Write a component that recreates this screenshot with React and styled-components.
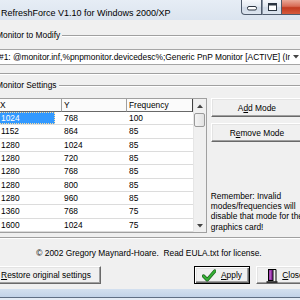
import React from 'react';
import styled, { createGlobalStyle, css } from 'styled-components';

const Global = createGlobalStyle`
  html, body { margin: 0; padding: 0; overflow: hidden; background: #f0f0f0; }
  #root { width: 300px; height: 300px; overflow: hidden; }
`;

const Win = styled.div`
  width: 358px;
  margin-left: -24px;
  background: linear-gradient(#d9e4f1, #c8d7ea);
  font-family: "Liberation Sans", Arial, sans-serif;
  font-size: 8.4px;
  color: #000;
`;

const TitleBar = styled.div`
  height: 20px;
  display: flex;
  align-items: flex-start;
  padding-left: 25px;
  background: linear-gradient(#e6edf5, #dbe4ef);
`;

const TitleText = styled.div`
  flex: 1;
  margin-top: 5.5px;
  line-height: 14px;
  font-size: 9px;
  white-space: nowrap;
`;

const CaptionButtons = styled.div`
  display: flex;
  height: 15px;
  margin-right: 6px;
`;

const CaptionButton = styled.div`
  width: ${p => p.$w}px;
  height: 15px;
  box-sizing: border-box;
  display: flex;
  justify-content: center;
  align-items: ${p => (p.$kind === 'min' ? 'flex-end' : 'center')};
  padding-bottom: ${p => (p.$kind === 'min' ? 3 : 0)}px;
  border: 1px solid #4f5b6c;
  border-top: none;
  background: linear-gradient(#f6f8fb, #e3e9f1 45%, #d0dae7 55%, #dde5ef);
  ${p => p.$kind === 'min' && css`border-bottom-left-radius: 4px;`}
  ${p => p.$kind === 'max' && css`border-left: 1px solid #8a95a4;`}
  ${p =>
    p.$kind === 'close' &&
    css`
      border-left: none;
      border-bottom-right-radius: 4px;
      background: linear-gradient(#eaa999, #d86b55 45%, #c23a20 55%, #d65b3d);
    `}
`;

const Client = styled.div`
  margin: 0 6px;
  background: #f0f0f0;
  padding: 15px 21px 5px 9px;
  display: flex;
  flex-direction: column;
`;

const GroupBox = styled.section`
  border: 1px solid #a0a0a0;
  box-shadow: inset 1px 1px 0 #fff, 1px 1px 0 #fff;
  padding: 0 3px ${p => p.$pb}px 4px;
  margin-top: ${p => p.$mt}px;
  display: flex;
  flex-direction: column;
`;

const GroupLabel = styled.div`
  width: fit-content;
  margin: -6px 0 0 -2px;
  padding: 0 2px;
  line-height: 10px;
  background: #f0f0f0;
  white-space: nowrap;
`;

const Combo = styled.div`
  margin-top: 9px;
  height: 16px;
  box-sizing: border-box;
  display: flex;
  border: 1px solid #a6a6a6;
  background: #fff;
`;

const ComboText = styled.div`
  flex: 1;
  overflow: hidden;
  white-space: nowrap;
  padding-left: 2px;
  line-height: 14px;
`;

const ComboArrow = styled.div`
  width: 12px;
  display: flex;
  align-items: center;
  justify-content: center;
`;

const SettingsRow = styled.div`
  margin-top: 8px;
  display: flex;
  gap: 4px;
`;

const ListView = styled.div`
  width: 212px;
  height: 135px;
  box-sizing: border-box;
  border: 1px solid #a0a0a0;
  background: #fff;
  display: flex;
  overflow: hidden;
`;

const ListBody = styled.div`
  width: 196px;
  display: flex;
  flex-direction: column;
`;

const HeaderRow = styled.div`
  display: grid;
  grid-template-columns: 65px 65px 66px;
  height: 13px;
`;

const HeaderCell = styled.div`
  box-sizing: border-box;
  line-height: 12px;
  padding-left: ${p => p.$pad}px;
  background: #fbfbfb;
  border-right: 1px solid ${p => (p.$last ? '#404040' : '#a0a0a0')};
  border-bottom: 1px solid #696969;
  white-space: nowrap;
`;

const Row = styled.div`
  display: grid;
  grid-template-columns: 65px 65px 66px;
  height: 13.33px;
  box-sizing: border-box;
  border-bottom: 1px solid #dcdcdc;
`;

const Cell = styled.div`
  line-height: 12.33px;
  padding-left: ${p => p.$pad}px;
  white-space: nowrap;
`;

const SelectedText = styled.div`
  width: 58px;
  height: 100%;
  box-sizing: border-box;
  padding-left: 4px;
  line-height: 12.33px;
  background: #3399ff;
  color: #fff;
  outline: 1px dotted #ffe0a0;
  outline-offset: -1px;
`;

const ScrollBar = styled.div`
  width: 14px;
  display: flex;
  flex-direction: column;
  background: #f0f0f0;
  border-left: 1px solid #e6e6e6;
  box-sizing: border-box;
`;

const ScrollArrow = styled.div`
  height: ${p => p.$h}px;
  display: flex;
  align-items: center;
  justify-content: center;
`;

const ScrollTrack = styled.div`
  flex: 1;
  display: flex;
  flex-direction: column;
  align-items: center;
`;

const ScrollThumb = styled.div`
  width: 11px;
  height: 14px;
  margin-top: 1px;
  box-sizing: border-box;
  border: 1px solid #9a9a9a;
  border-radius: 2px;
  background: linear-gradient(90deg, #f4f4f4, #e2e2e2);
`;

const SidePanel = styled.div`
  flex: 1;
  display: flex;
  flex-direction: column;
  gap: 6px;
`;

const bevel = css`
  border: 1px solid;
  border-color: #fff #696969 #696969 #fff;
  box-shadow: inset -1px -1px 0 #a0a0a0, inset 1px 1px 0 #e3e3e3;
`;

const Button = styled.div`
  height: ${p => p.$h || 19}px;
  width: ${p => (p.$w ? `${p.$w}px` : 'auto')};
  flex-shrink: 0;
  box-sizing: border-box;
  background: #f0f0f0;
  display: flex;
  align-items: center;
  justify-content: center;
  gap: ${p => p.$gap || 0}px;
  white-space: nowrap;
  ${p =>
    p.$default
      ? css`
          border: 1px solid #000;
          box-shadow: inset 1px 1px 0 #fff, inset -1px -1px 0 #696969,
            inset -2px -2px 0 #a0a0a0, inset 2px 2px 0 #e3e3e3;
        `
      : bevel}
`;

const Note = styled.div`
  margin-top: auto;
  line-height: 10.3px;
  white-space: nowrap;
  padding-bottom: 1px;
`;

const Copyright = styled.div`
  margin-top: 10px;
  line-height: 10px;
  text-align: center;
  white-space: pre;
`;

const ButtonRow = styled.div`
  margin-top: 8px;
  margin-right: -7px;
  display: flex;
  align-items: center;
`;

const Spacer = styled.div`
  flex: 1;
`;

const BottomFrame = styled.div`
  height: 8px;
  background: linear-gradient(#d3e0ef, #c2d3e8);
  border-bottom: 1px solid #5f6f84;
`;

const Desk = styled.div`
  height: 4px;
  background: #e4ecf5;
`;

const Tri = ({ up, color = '#444' }) => (
  <svg width="6" height="4" viewBox="0 0 6 4">
    <path d={up ? 'M0 4 L3 0.5 L6 4 Z' : 'M0 0 L3 3.5 L6 0 Z'} fill={color} />
  </svg>
);

const CheckIcon = () => (
  <svg width="14" height="13" viewBox="0 0 14 13">
    <path d="M1.5 7 L5.2 10.8 L12.8 2" fill="none" stroke="#1f5f1f" strokeWidth="3.4" strokeLinecap="round" strokeLinejoin="round" />
    <path d="M1.5 7 L5.2 10.8 L12.8 2" fill="none" stroke="#34b034" strokeWidth="2" strokeLinecap="round" strokeLinejoin="round" />
  </svg>
);

const DoorIcon = () => (
  <svg width="12" height="15" viewBox="0 0 12 15">
    <rect x="2.5" y="1.5" width="4.5" height="11" fill="#8e2a9e" stroke="#000" strokeWidth="1" />
    <rect x="3.5" y="2.5" width="1.2" height="9" fill="#c46ad0" />
    <path d="M2 1.5 H10 V13.5" fill="none" stroke="#000" strokeWidth="1" />
    <path d="M0.5 14 H11.5" stroke="#000" strokeWidth="1.4" />
  </svg>
);

const rows = [
  ['1024', '768', '100'],
  ['1152', '864', '85'],
  ['1280', '1024', '85'],
  ['1280', '720', '85'],
  ['1280', '768', '85'],
  ['1280', '800', '85'],
  ['1280', '960', '85'],
  ['1360', '768', '75'],
  ['1600', '1024', '75'],
];

export default function App() {
  return (
    <>
      <Global />
      <Win>
        <TitleBar>
          <TitleText>RefreshForce V1.10 for Windows 2000/XP</TitleText>
          <CaptionButtons>
            <CaptionButton $kind="min" $w={21}>
              <svg width="10" height="5" viewBox="0 0 10 5">
                <rect x="0.5" y="0.5" width="9" height="3.5" rx="1.5" fill="#fff" stroke="#2b3440" />
              </svg>
            </CaptionButton>
            <CaptionButton $kind="max" $w={20}>
              <svg width="9" height="8" viewBox="0 0 9 8">
                <rect x="0.5" y="0.5" width="8" height="7" fill="#fff" stroke="#2b3440" />
                <rect x="1" y="1" width="7" height="1.5" fill="#2b3440" />
              </svg>
            </CaptionButton>
            <CaptionButton $kind="close" $w={46}>
              <svg width="10" height="9" viewBox="0 0 10 9">
                <path d="M1 1 L9 8 M9 1 L1 8" stroke="#fff" strokeWidth="2" />
              </svg>
            </CaptionButton>
          </CaptionButtons>
        </TitleBar>
        <Client>
          <GroupBox $mt={0} $pb={8}>
            <GroupLabel>Monitor to Modify</GroupLabel>
            <Combo>
              <ComboText>
                #1: @monitor.inf,%pnpmonitor.devicedesc%;Generic PnP Monitor [ACTIVE] (Integrated)
              </ComboText>
              <ComboArrow>
                <Tri />
              </ComboArrow>
            </Combo>
          </GroupBox>
          <GroupBox $mt={11} $pb={4}>
            <GroupLabel>Monitor Settings</GroupLabel>
            <SettingsRow>
              <ListView>
                <ListBody>
                  <HeaderRow>
                    <HeaderCell $pad={3}>X</HeaderCell>
                    <HeaderCell $pad={2}>Y</HeaderCell>
                    <HeaderCell $pad={2} $last>
                      Frequency
                    </HeaderCell>
                  </HeaderRow>
                  {rows.map((r, i) => (
                    <Row key={i}>
                      {i === 0 ? (
                        <Cell $pad={0}>
                          <SelectedText>{r[0]}</SelectedText>
                        </Cell>
                      ) : (
                        <Cell $pad={4}>{r[0]}</Cell>
                      )}
                      <Cell $pad={2}>{r[1]}</Cell>
                      <Cell $pad={2}>{r[2]}</Cell>
                    </Row>
                  ))}
                </ListBody>
                <ScrollBar>
                  <ScrollArrow $h={13}>
                    <Tri up />
                  </ScrollArrow>
                  <ScrollTrack>
                    <ScrollThumb />
                  </ScrollTrack>
                  <ScrollArrow $h={12}>
                    <Tri />
                  </ScrollArrow>
                </ScrollBar>
              </ListView>
              <SidePanel>
                <Button>
                  A<u>d</u>d Mode
                </Button>
                <Button>
                  R<u>e</u>move Mode
                </Button>
                <Note>
                  Remember: Invalid
                  <br />
                  modes/frequencies will
                  <br />
                  disable that mode for the
                  <br />
                  graphics card!
                </Note>
              </SidePanel>
            </SettingsRow>
          </GroupBox>
          <Copyright>{'© 2002 Gregory Maynard-Hoare.  Read EULA.txt for license.'}</Copyright>
          <ButtonRow>
            <Button $h={18} $w={110}>
              <span>
                <u>R</u>estore original settings
              </span>
            </Button>
            <Spacer />
            <Button $h={18} $w={56} $default $gap={5}>
              <CheckIcon />
              <span>
                <u>A</u>pply
              </span>
            </Button>
            <Button $h={18} $w={58} $gap={4} style={{ marginLeft: 6 }}>
              <DoorIcon />
              <span>
                <u>C</u>lose
              </span>
            </Button>
          </ButtonRow>
        </Client>
        <BottomFrame />
        <Desk />
      </Win>
    </>
  );
}
